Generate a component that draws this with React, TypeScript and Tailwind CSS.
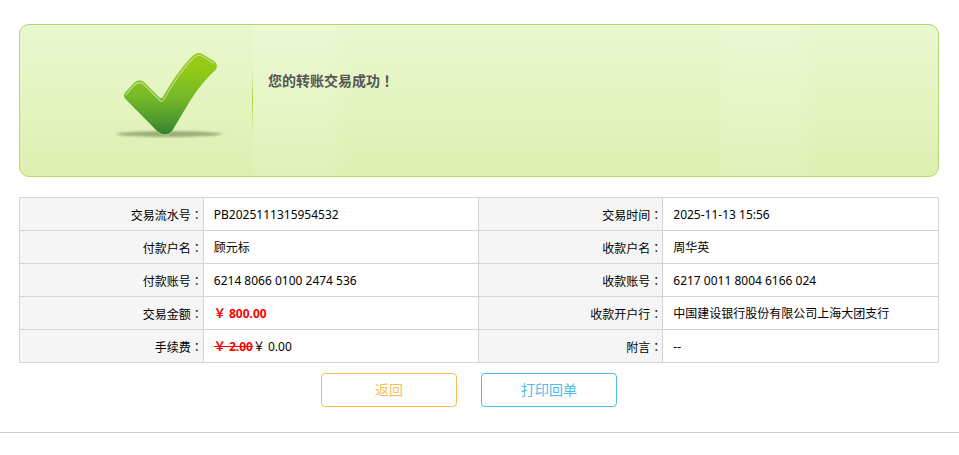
import React from "react";

const rows = [
  [
    { label: "交易流水号", value: "PB2025111315954532" },
    { label: "交易时间", value: "2025-11-13 15:56" },
  ],
  [
    { label: "付款户名", value: "顾元标" },
    { label: "收款户名", value: "周华英" },
  ],
  [
    { label: "付款账号", value: "6214 8066 0100 2474 536" },
    { label: "收款账号", value: "6217 0011 8004 6166 024" },
  ],
  [
    {
      label: "交易金额",
      value: <strong className="font-bold text-[#ff0000]">￥ 800.00</strong>,
    },
    { label: "收款开户行", value: "中国建设银行股份有限公司上海大团支行" },
  ],
  [
    {
      label: "手续费",
      value: (
        <>
          <del className="font-bold text-[#ff0000]">￥ 2.00</del>￥ 0.00
        </>
      ),
    },
    { label: "附言", value: "--" },
  ],
];

// Punctuation is centred in its full-width box
const Mark = ({ children }: { children: string }) => (
  <span className="font-['Noto_Sans_CJK_TC',sans-serif]">{children}</span>
);

const SuccessIcon = () => (
  <svg
    width="140"
    height="110"
    viewBox="0 0 140 110"
    fill="none"
    className="shrink-0"
    aria-hidden="true"
  >
    <defs>
      <linearGradient id="tick" x1="0" y1="13" x2="0" y2="95" gradientUnits="userSpaceOnUse">
        <stop offset="0" stopColor="#9bcb12" />
        <stop offset="0.25" stopColor="#90c819" />
        <stop offset="0.55" stopColor="#74b728" />
        <stop offset="0.8" stopColor="#509d2c" />
        <stop offset="1" stopColor="#2f812f" />
      </linearGradient>
      <filter id="soft" x="-10%" y="-80%" width="120%" height="260%">
        <feGaussianBlur stdDeviation="2 1" />
      </filter>
    </defs>
    <ellipse cx="69" cy="94" rx="52" ry="3" fill="#788a5c" fillOpacity="0.65" filter="url(#soft)" />
    <path
      d="M25 58.5 Q23 56 25 52.500 L34 43 Q39.500 37.500 45 43 L60 58 Q61.500 59 63 57 Q77 32 91 17.500 Q98 10 104 15 L114 21 Q119 25 115.500 30 Q102 42 90 61 L72 91 Q69 95 65 95 Q61 95 57.500 91.500 Z"
      fill="url(#tick)"
    />
    <path
      d="M25.500 55 L34.500 45 Q39.500 40.500 44.500 45 L60 60.500 Q61.500 62.500 63.500 60 Q78 34 92 19.500 Q98 13 103.500 17 L114 23.500"
      stroke="#b6dd85"
      strokeWidth="1.200"
    />
    <path
      d="M58 92 Q61 95 65 95 Q69 95 71.500 92"
      stroke="#c3dfaa"
      strokeWidth="0.800"
    />
  </svg>
);

const App = () => {
  return (
    <main className="bg-white pt-6 text-xs text-black font-['Noto_Sans','Noto_Sans_CJK_SC',sans-serif]">
      <div className="pl-[19px] pr-5">
        <section className="flex min-h-[153px] items-start rounded-[10px] border border-[#b2d96f] bg-[linear-gradient(90deg,transparent_233px,#ffffff1c_233px,#ffffff1c_310px,transparent_330px,transparent_701px,#ffffff1c_701px,#ffffff1c_778px,transparent_798px),linear-gradient(180deg,#e9f7cf,#e3f4be_55%,#deefb0)] pl-20 pt-[15px]">
          <SuccessIcon />
          <div className="ml-3 mt-7 h-16 w-px shrink-0 bg-linear-to-b from-transparent via-[#a9d43c] to-transparent" />
          <h1 className="ml-[15px] mt-[30px] text-sm leading-5 font-bold text-[#555555]">
            您的转账交易成功<Mark>！</Mark>
          </h1>
        </section>

        <table className="mt-5 w-full table-fixed border-collapse">
          <colgroup>
            <col className="w-1/5" />
            <col className="w-[30%]" />
            <col className="w-1/5" />
            <col className="w-[30%]" />
          </colgroup>
          <tbody>
            {rows.map((row) => (
              <tr key={row[0].label} className="h-[33px]">
                {row.map((item) => (
                  <React.Fragment key={item.label}>
                    <th
                      scope="row"
                      className="border border-[#d3d3d3] bg-[#f5f5f5] pt-0.5 text-right leading-5 font-normal"
                    >
                      {item.label}
                      <Mark>：</Mark>
                    </th>
                    <td className="border border-[#d3d3d3] pt-0.5 pl-2.5 leading-5">
                      {item.value}
                    </td>
                  </React.Fragment>
                ))}
              </tr>
            ))}
          </tbody>
        </table>

        <div className="mt-2.5 flex justify-center gap-1 text-sm">
          <button
            type="button"
            className="mr-5 h-[34px] w-[136px] cursor-pointer rounded border border-[#f8bd57] bg-white text-[#f8bd57]"
          >
            返回
          </button>
          <button
            type="button"
            className="mr-5 h-[34px] w-[136px] cursor-pointer rounded border border-[#4dbbeb] bg-white text-[#4dbbeb]"
          >
            打印回单
          </button>
        </div>
      </div>
      <hr className="mt-[25px] border-[#cccccc]" />
    </main>
  );
};

export default App;
